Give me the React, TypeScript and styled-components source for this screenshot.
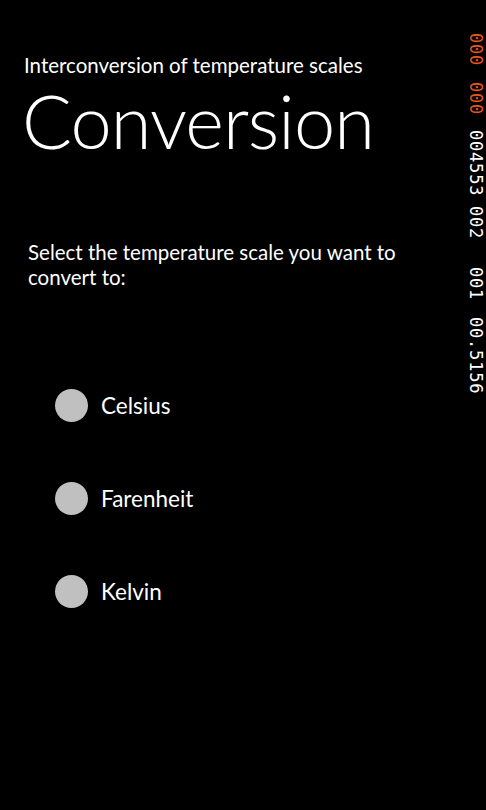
import React from 'react';
import styled, { createGlobalStyle } from 'styled-components';

const GlobalStyle = createGlobalStyle`
  html, body {
    margin: 0;
    padding: 0;
    background: #000;
  }
  body {
    font-family: Lato, 'Open Sans', sans-serif;
    color: #fff;
  }
`;

const Screen = styled.div`
  position: relative;
  width: 486px;
  height: 810px;
  background: #000;
  overflow: hidden;
`;

const Header = styled.header`
  padding: 51px 0 0 24px;
`;

const Subtitle = styled.div`
  font-size: 20.5px;
  line-height: 28px;
`;

const Title = styled.h1`
  margin: 2px 0 0 -2px;
  font-size: 74px;
  font-weight: 300;
  line-height: 80px;
  letter-spacing: -0.9px;
`;

const Prompt = styled.p`
  margin: 79px 0 0 28px;
  font-size: 20.5px;
  line-height: 25px;
  width: 390px;
`;

const Options = styled.div`
  display: flex;
  flex-direction: column;
  gap: 60px;
  margin: 99px 0 0 55px;
`;

const Option = styled.label`
  display: flex;
  align-items: center;
  gap: 13px;
  height: 33px;
  font-size: 22.5px;
`;

const Dot = styled.span`
  width: 33px;
  height: 33px;
  border-radius: 50%;
  background: #c0c0c0;
`;

// frame rate counter, drawn sideways down the right edge
const Counter = styled.div`
  position: absolute;
  top: 33px;
  left: 468px;
  display: flex;
  flex-direction: column;
  font-family: 'DejaVu Sans Mono', monospace;
  font-size: 17px;
  letter-spacing: 0.8px;
`;

const Field = styled.span<{ $gap: number; $hot?: boolean }>`
  writing-mode: vertical-rl;
  width: 15px;
  line-height: 15px;
  margin-top: ${(p) => p.$gap}px;
  color: ${(p) => (p.$hot ? '#e8541c' : '#fff')};
  white-space: nowrap;
`;

const scales = ['Celsius', 'Farenheit', 'Kelvin'];

const fields = [
  { text: '000', gap: 0, hot: true },
  { text: '000', gap: 16, hot: true },
  { text: '004553', gap: 15 },
  { text: '002', gap: 10 },
  { text: '001', gap: 27 },
  { text: '00.5156', gap: 17 },
];

const App: React.FC = (): JSX.Element => (
  <Screen>
    <GlobalStyle />
    <Header>
      <Subtitle>Interconversion of temperature scales</Subtitle>
      <Title>Conversion</Title>
    </Header>
    <Prompt>Select the temperature scale you want to convert to:</Prompt>
    <Options>
      {scales.map((name) => (
        <Option key={name}>
          <Dot />
          {name}
        </Option>
      ))}
    </Options>
    <Counter>
      {fields.map((f, i) => (
        <Field key={`field-${i}`} $gap={f.gap} $hot={f.hot}>
          {f.text}
        </Field>
      ))}
    </Counter>
  </Screen>
);

export default App;
